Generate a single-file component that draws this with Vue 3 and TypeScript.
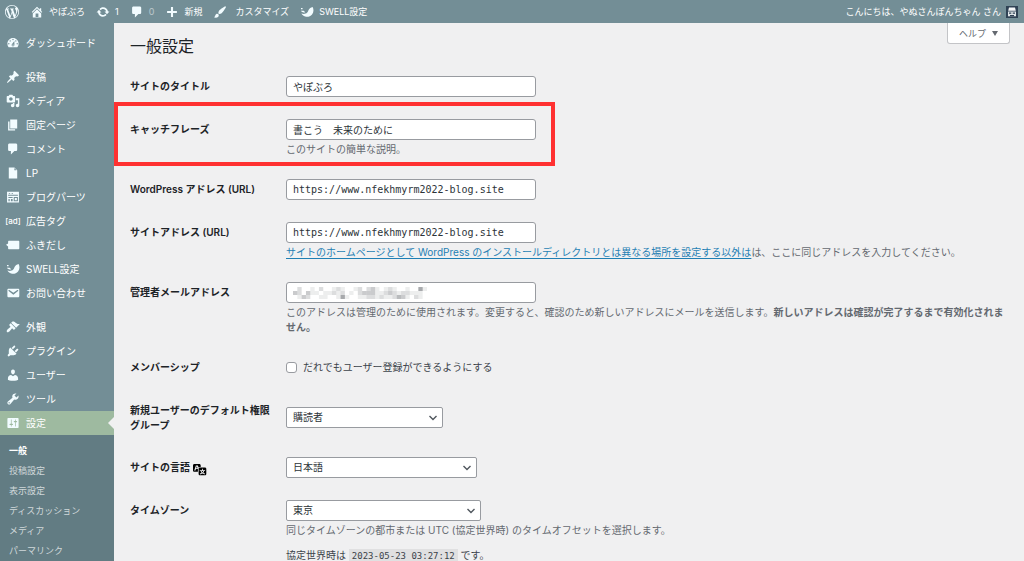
<script setup lang="ts">
import { ref } from 'vue'

interface MenuItem {
  label: string
  icon: string
  current?: boolean
}

const icons: Record<string, string> = {
  wordpress:
    'M20 10c0-5.51-4.49-10-10-10C4.48 0 0 4.49 0 10c0 5.52 4.48 10 10 10 5.51 0 10-4.48 10-10zM7.78 15.37L4.37 6.22c.55-.02 1.17-.08 1.17-.08.5-.06.44-1.13-.06-1.11 0 0-1.45.11-2.37.11-.18 0-.37 0-.58-.01C4.12 2.69 6.87 1.11 10 1.11c2.33 0 4.45.87 6.05 2.34-.68-.11-1.65.39-1.65 1.58 0 .74.45 1.36.9 2.1.35.61.55 1.36.55 2.46 0 1.49-1.4 5-1.4 5l-3.03-8.37c.54-.02.82-.17.82-.17.5-.05.44-1.25-.06-1.22 0 0-1.44.12-2.38.12-.87 0-2.33-.12-2.33-.12-.5-.03-.56 1.2-.06 1.22l.92.08 1.26 3.41zM17.41 10c.24-.64.74-1.87.43-4.25.7 1.29 1.05 2.71 1.05 4.25 0 3.29-1.73 6.24-4.4 7.78.97-2.59 1.94-5.2 2.92-7.78zM6.1 18.09C3.12 16.65 1.11 13.53 1.11 10c0-1.3.23-2.48.72-3.59C3.25 10.3 4.67 14.2 6.1 18.09zm4.03-6.63l2.58 6.98c-.86.29-1.76.45-2.71.45-.79 0-1.57-.11-2.29-.33.81-2.38 1.62-4.74 2.42-7.1z',
  home: 'M16 8.5l1.53 1.53-1.06 1.06L10 4.6l-6.47 6.49-1.06-1.06L10 2.5l4 4v-2h2v4zm-6-2.46l6 5.99V18H4v-5.97zM12 17v-5H8v5h4z',
  update:
    'M10.2 3.28c3.53 0 6.43 2.61 6.92 6h2.08l-3.5 4-3.5-4h2.32c-.45-1.97-2.21-3.45-4.32-3.45-1.45 0-2.73.71-3.54 1.78L4.95 5.66C6.23 4.2 8.11 3.28 10.2 3.28zm-.4 13.44c-3.52 0-6.43-2.61-6.92-6H.8l3.5-4c1.17 1.33 2.33 2.67 3.5 4H5.48c.45 1.97 2.21 3.45 4.32 3.45 1.45 0 2.73-.71 3.54-1.78l1.71 1.95c-1.28 1.46-3.15 2.38-5.25 2.38z',
  comment: 'M5 2h9c1.1 0 2 .9 2 2v7c0 1.1-.9 2-2 2h-2l-5 5v-5H5c-1.1 0-2-.9-2-2V4c0-1.1.9-2 2-2z',
  plus: 'M17 8.5v3h-5.500v5.500h-3v-5.500H3v-3h5.500V3h3v5.500z',
  brush:
    'M18.33 3.57s.27-.8-.31-1.36c-.53-.52-1.22-.24-1.22-.24-.61.3-5.76 3.47-7.67 5.57-.86.96-2.06 3.79-1.09 4.82.92.98 3.96-.17 4.79-1 2.06-2.06 5.21-7.17 5.5-7.79zM1.4 17.65c2.37-1.56 1.46-3.41 3.23-4.64.93-.65 2.22-.62 3.08.29.63.67.8 2.57-.16 3.46-1.57 1.45-4 1.55-6.15.89z',
  swell:
    'M18 2.800c1.800 3.400 1.700 7.600-.8 10.600-2.500 3.100-6.300 4.100-9.800 3.100C4.900 15.800 3.100 14.300 2 12.200c3.200 1 6.300.6 8.300-1.500 2.100-2.200 1.900-6.600 7.700-7.900zM1.200 8.300l4-.2 2.300 2.100c-2.400.9-4.800.1-6.300-1.900zM1.400 4.200h2.300v2H1.400z',
  dashboard:
    'M3.76 16h12.48c1.1-1.37 1.76-3.11 1.76-5 0-4.42-3.58-8-8-8s-8 3.58-8 8c0 1.89.66 3.63 1.76 5zM10 4c.55 0 1 .45 1 1s-.45 1-1 1-1-.45-1-1 .45-1 1-1zM6 6c.55 0 1 .45 1 1s-.45 1-1 1-1-.45-1-1 .45-1 1-1zm8 0c.55 0 1 .45 1 1s-.45 1-1 1-1-.45-1-1 .45-1 1-1zm-5.37 5.55L12 7v6c0 1.1-.9 2-2 2s-2-.9-2-2c0-.57.24-1.08.63-1.45zM4 10c.55 0 1 .45 1 1s-.45 1-1 1-1-.45-1-1 .45-1 1-1zm12 0c.55 0 1 .45 1 1s-.45 1-1 1-1-.45-1-1 .45-1 1-1zm-5 3c0-.55-.45-1-1-1s-1 .45-1 1 .45 1 1 1 1-.45 1-1z',
  pin: 'M10.44 3.02l1.82-1.82 6.36 6.35-1.83 1.82c-1.05-.68-2.48-.57-3.41.36l-.75.75c-.92.93-1.04 2.35-.35 3.41l-1.83 1.82-2.41-2.41-2.8 2.79c-.42.42-3.38 2.71-3.8 2.29s1.86-3.39 2.28-3.81l2.79-2.79L4.1 9.36l1.83-1.82c1.05.69 2.48.57 3.4-.36l.75-.75c.93-.92 1.05-2.35.36-3.41z',
  media:
    'M13 11V4c0-.55-.45-1-1-1h-1.67L9 1H5L3.67 3H2c-.55 0-1 .45-1 1v7c0 .55.45 1 1 1h10c.55 0 1-.45 1-1zM7 4.5c1.38 0 2.5 1.12 2.5 2.5S8.38 9.5 7 9.5 4.5 8.38 4.5 7 5.62 4.5 7 4.5zM14 6h5v10.5c0 1.38-1.12 2.5-2.5 2.5S14 17.88 14 16.5s1.12-2.5 2.5-2.5c.17 0 .34.02.5.05V9h-3V6zm-4 8.05V13h2v3.5c0 1.38-1.12 2.5-2.5 2.5S7 17.88 7 16.5 8.12 14 9.5 14c.17 0 .34.02.5.05z',
  page: 'M6 15V2h10v13H6zm-1 1h8v2H3V5h2v11z',
  document: 'M12 2l4 4v12H4V2h8zm0 4h3l-3-3v3z',
  layout:
    'M1.500 2.500h17v15.500h-17zM3 6.800v1.400h14V6.800zM4 4.200v1h2v-1zm4 0v1h2v-1zM3.500 10v1.500h6V10zm0 3v3.200h1.800V13zm3.500 0v3.200h2.500V13zm4-3v6.200h6V10zm1.500 1.500h3v3.200h-3z',
  balloon: 'M4.500 4h13c.9 0 1.500.6 1.500 1.500v9c0 .9-.6 1.500-1.500 1.500h-13c-.9 0-1.500-.6-1.500-1.500V12L0 9.800 3 8V5.500C3 4.600 3.600 4 4.500 4z',
  mail: 'M3.87 4h13.25C18.37 4 19 4.59 19 5.79v8.42c0 1.19-.63 1.79-1.88 1.79H3.87c-1.25 0-1.88-.6-1.88-1.79V5.79c0-1.2.63-1.79 1.88-1.79zm6.62 8.6l6.74-5.53c.24-.2.43-.66.13-1.07-.29-.41-.82-.42-1.17-.17l-5.7 3.86L4.8 5.83c-.35-.25-.88-.24-1.17.17-.3.41-.11.87.13 1.07z',
  appearance:
    'M14.48 11.06L7.41 3.99l1.5-1.5c.5-.56 2.3-.47 3.51.32 1.21.8 1.43 1.28 2.91 2.1 1.18.64 2.45 1.26 4.45.85zm-.71.71L6.7 4.7 4.93 6.47c-.39.39-.39 1.02 0 1.41l1.06 1.06c.39.39.39 1.03 0 1.42-.6.6-1.43 1.11-2.21 1.69-.35.26-.7.53-1.01.84C1.43 14.23.4 16.08 1.4 17.07c.99 1 2.84-.03 4.18-1.36.31-.31.58-.66.85-1.02.57-.78 1.08-1.61 1.69-2.21.39-.39 1.02-.39 1.41 0l1.06 1.06c.39.39 1.02.39 1.41 0z',
  plugin:
    'M13.11 4.36L9.87 7.6 8 5.73l3.24-3.24c.35-.34 1.05-.2 1.56.32.52.51.66 1.21.31 1.55zm-8 1.77l.91-1.12 9.01 9.01-1.19.84c-.71.71-2.63 1.16-3.82 1.16H6.14L4.9 17.26c-.59.59-1.54.59-2.12 0-.59-.58-.59-1.53 0-2.12l1.24-1.24v-3.88c0-1.13.4-3.19 1.09-3.89zm7.26 3.97l3.24-3.24c.34-.35 1.04-.21 1.55.31.52.51.66 1.21.31 1.55l-3.24 3.25z',
  user: 'M10 9.25c-2.27 0-2.73-3.44-2.73-3.44C7 4.02 7.82 2 9.97 2c2.16 0 2.98 2.02 2.71 3.81 0 0-.41 3.44-2.68 3.44zm0 2.57L12.72 10c2.39 0 4.52 2.33 4.52 4.53v2.49s-3.65 1.13-7.24 1.13c-3.65 0-7.24-1.13-7.24-1.13v-2.49c0-2.25 1.94-4.48 4.47-4.48z',
  wrench:
    'M16.68 9.77c-1.34 1.34-3.3 1.67-4.95.99l-5.41 6.52c-.99.99-2.59.99-3.58 0s-.99-2.59 0-3.57l6.52-5.42c-.68-1.65-.35-3.61.99-4.95 1.28-1.28 3.12-1.62 4.72-1.06l-2.89 2.89 2.82 2.82 2.86-2.87c.53 1.58.18 3.39-1.08 4.65zM3.81 16.21c.4.39 1.04.39 1.43 0 .4-.4.4-1.04 0-1.43-.39-.4-1.03-.4-1.43 0-.39.39-.39 1.03 0 1.43z',
  settings:
    'M18 16V4c0-.55-.45-1-1-1H3c-.55 0-1 .45-1 1v12c0 .55.45 1 1 1h14c.55 0 1-.45 1-1zM8 11h1c.55 0 1 .45 1 1s-.45 1-1 1H8v1.5c0 .28-.22.5-.5.5s-.5-.22-.5-.5V13H6c-.55 0-1-.45-1-1s.45-1 1-1h1V5.500c0-.28.22-.5.5-.5s.5.22.5.5V11zm5-2h-1c-.55 0-1-.45-1-1s.45-1 1-1h1V5.500c0-.28.22-.5.5-.5s.5.22.5.5V7h1c.55 0 1 .45 1 1s-.45 1-1 1h-1v5.500c0 .28-.22.5-.5.5s-.5-.22-.5-.5V9z',
  translate:
    'M11 7H9.49c-.63 0-1.25.3-1.59.7L7 5H4.13l-2.39 7h1.69l.74-2H7v4H2c-1.1 0-2-.9-2-2V5c0-1.1.9-2 2-2h7c1.1 0 2 .9 2 2v2zM6.51 9H4.49l1-2.93zM10 8h7c1.1 0 2 .9 2 2v7c0 1.1-.9 2-2 2h-7c-1.1 0-2-.9-2-2v-7c0-1.1.9-2 2-2zm7.25 5v-1.08h-3.17V9.75h-1.16v2.17H9.75V13h1.28c.11.85.56 1.85 1.28 2.62-.87.36-1.89.62-2.31.62-.01.02.22.97.2 1.46.84 0 2.21-.5 3.28-1.15 1.09.65 2.48 1.15 3.34 1.15-.02-.49.2-1.44.2-1.46-.43 0-1.49-.27-2.38-.63.7-.77 1.14-1.77 1.25-2.61h1.36zm-3.81 1.93c-.5-.46-.85-1.13-1.01-1.93h2.09c-.17.8-.51 1.47-1 1.93l-.04.03s-.03-.02-.04-.03z',
}

const menuGroups: MenuItem[][] = [
  [{ label: 'ダッシュボード', icon: 'dashboard' }],
  [
    { label: '投稿', icon: 'pin' },
    { label: 'メディア', icon: 'media' },
    { label: '固定ページ', icon: 'page' },
    { label: 'コメント', icon: 'comment' },
    { label: 'LP', icon: 'document' },
    { label: 'ブログパーツ', icon: 'layout' },
    { label: '広告タグ', icon: 'ad' },
    { label: 'ふきだし', icon: 'balloon' },
    { label: 'SWELL設定', icon: 'swell' },
    { label: 'お問い合わせ', icon: 'mail' },
  ],
  [
    { label: '外観', icon: 'appearance' },
    { label: 'プラグイン', icon: 'plugin' },
    { label: 'ユーザー', icon: 'user' },
    { label: 'ツール', icon: 'wrench' },
    { label: '設定', icon: 'settings', current: true },
  ],
]

const submenu = ['一般', '投稿設定', '表示設定', 'ディスカッション', 'メディア', 'パーマリンク']

const toolbar = [
  { icon: 'home', label: 'やぽぶろ', kind: 'site' },
  { icon: 'update', label: '1', kind: 'updates' },
  { icon: 'comment', label: '0', kind: 'comments' },
  { icon: 'plus', label: '新規', kind: 'new' },
  { icon: 'brush', label: 'カスタマイズ', kind: 'customize' },
  { icon: 'swell', label: 'SWELL設定', kind: 'swell' },
]

const siteTitle = ref('やぽぶろ')
const tagline = ref('書こう　未来のために')
const wpUrl = ref('https://www.nfekhmyrm2022-blog.site')
const siteUrl = ref('https://www.nfekhmyrm2022-blog.site')
const email = ref('')
const membership = ref(false)

/* Darkness of each tile in the mosaic over the address, 0 (white) to 9. */
const mosaicRows = [
  '0200102001210012023101210010051',
  '3203110112120102333112321221110',
  '0132001100151001122121124310210',
]
const tiles = mosaicRows.flatMap((row, y) =>
  [...row].map((level, x) => ({ x: x * 13, y: y * 12, shade: Number(level) * 0.1 })),
)
</script>

<template>
  <div class="admin">
    <header class="topbar">
      <a href="#" class="wp-logo" aria-label="WordPress">
        <svg viewBox="0 0 20 20"><path :d="icons.wordpress" /></svg>
      </a>
      <a v-for="item in toolbar" :key="item.kind" href="#" class="tool" :class="item.kind">
        <svg viewBox="0 0 20 20"><path :d="icons[item.icon]" fill-rule="evenodd" /></svg>
        <span>{{ item.label }}</span>
      </a>
      <a href="#" class="account">
        <span>こんにちは、やぬさんぽんちゃん さん</span>
        <svg class="avatar" viewBox="0 0 12 12">
          <rect width="12" height="12" fill="#2f4254" />
          <path d="M3 1.500h6l.8 3.200H2.200z" fill="#f4f6f7" />
          <path d="M2 5.500h8v4.800H2z" fill="#dfe5e8" />
          <path d="M3 6.500h2.300v1.200H3zm3.700 0H9v1.200H6.700zM4 9h4v1.300H4z" fill="#2f4254" />
        </svg>
      </a>
    </header>

    <div class="body">
      <nav class="sidebar">
        <ul v-for="(group, g) in menuGroups" :key="g" class="menu">
          <li v-for="item in group" :key="item.label">
            <a href="#" class="menu-link" :class="{ current: item.current }">
              <span v-if="item.icon === 'ad'" class="ad">[ad]</span>
              <svg v-else viewBox="0 0 20 20"><path :d="icons[item.icon]" fill-rule="evenodd" /></svg>
              <span>{{ item.label }}</span>
            </a>
          </li>
        </ul>
        <ul class="submenu">
          <li v-for="(label, i) in submenu" :key="label">
            <a href="#" :class="{ active: i === 0 }">{{ label }}</a>
          </li>
        </ul>
      </nav>

      <main class="content">
        <div class="heading">
          <h1>一般設定</h1>
          <button type="button" class="help">ヘルプ <span class="caret"></span></button>
        </div>

        <form @submit.prevent>
          <div class="row">
            <label class="name" for="title">サイトのタイトル</label>
            <div class="field"><input id="title" v-model="siteTitle" type="text" class="text" /></div>
          </div>

          <div class="row highlighted">
            <label class="name" for="tagline">キャッチフレーズ</label>
            <div class="field">
              <input id="tagline" v-model="tagline" type="text" class="text" />
              <p class="description">このサイトの簡単な説明。</p>
            </div>
          </div>

          <div class="row">
            <label class="name" for="wpurl">WordPress アドレス (URL)</label>
            <div class="field"><input id="wpurl" v-model="wpUrl" type="url" class="text code" /></div>
          </div>

          <div class="row">
            <label class="name" for="siteurl">サイトアドレス (URL)</label>
            <div class="field">
              <input id="siteurl" v-model="siteUrl" type="url" class="text code" />
              <p class="description">
                <a href="#">サイトのホームページとして WordPress のインストールディレクトリとは異なる場所を設定する以外は</a>は、ここに同じアドレスを入力してください。
              </p>
            </div>
          </div>

          <div class="row">
            <label class="name" for="email">管理者メールアドレス</label>
            <div class="field">
              <div class="masked">
                <input id="email" v-model="email" type="email" class="text" />
                <svg class="mosaic" viewBox="0 0 403 36" aria-hidden="true">
                  <rect
                    v-for="tile in tiles"
                    :key="tile.x + '-' + tile.y"
                    :x="tile.x"
                    :y="tile.y"
                    width="13"
                    height="12"
                    fill="#50545a"
                    :fill-opacity="tile.shade"
                  />
                </svg>
              </div>
              <p class="description">
                このアドレスは管理のために使用されます。変更すると、確認のため新しいアドレスにメールを送信します。<strong>新しいアドレスは確認が完了するまで有効化されません。</strong>
              </p>
            </div>
          </div>

          <div class="row">
            <span class="name">メンバーシップ</span>
            <div class="field">
              <label class="check">
                <input v-model="membership" type="checkbox" />
                <span>だれでもユーザー登録ができるようにする</span>
              </label>
            </div>
          </div>

          <div class="row">
            <label class="name" for="role">新規ユーザーのデフォルト権限グループ</label>
            <div class="field">
              <div class="select role">
                <select id="role"><option>購読者</option></select>
                <svg viewBox="0 0 10 10"><path d="M1.500 3l3.500 3.500L8.500 3" /></svg>
              </div>
            </div>
          </div>

          <div class="row">
            <label class="name" for="lang">サイトの言語
              <svg class="translate" viewBox="0 0 20 20"><path :d="icons.translate" /></svg>
            </label>
            <div class="field">
              <div class="select lang">
                <select id="lang"><option>日本語</option></select>
                <svg viewBox="0 0 10 10"><path d="M1.500 3l3.500 3.500L8.500 3" /></svg>
              </div>
            </div>
          </div>

          <div class="row">
            <label class="name" for="tz">タイムゾーン</label>
            <div class="field">
              <div class="select tz">
                <select id="tz"><option>東京</option></select>
                <svg viewBox="0 0 10 10"><path d="M1.500 3l3.500 3.500L8.500 3" /></svg>
              </div>
              <p class="description">同じタイムゾーンの都市または UTC (協定世界時) のタイムオフセットを選択します。</p>
              <p class="utc">協定世界時は <code>2023-05-23 03:27:12</code> です。</p>
            </div>
          </div>
        </form>
      </main>
    </div>
  </div>
</template>

<style>
body {
  background: #f0f0f1;
}
</style>

<style scoped>
.admin {
  display: flex;
  flex-direction: column;
  height: 100vh;
  overflow: hidden;
  background: #f0f0f1;
  color: #3c434a;
  font: 10px/15px Inter, 'Noto Sans CJK JP', sans-serif;
}

a {
  color: inherit;
  text-decoration: none;
}

ul {
  margin: 0;
  padding: 0;
  list-style: none;
}

.topbar {
  display: flex;
  align-items: center;
  flex: none;
  height: 23px;
  padding: 0 6px 0 5px;
  background: #738e96;
  color: #fff;
  font-size: 9px;
}

.topbar svg {
  flex: none;
  width: 14px;
  height: 14px;
  fill: #f2fcff;
}

.wp-logo {
  display: flex;
  margin-right: 11px;
}

.tool {
  display: flex;
  align-items: center;
  gap: 5px;
  margin-right: 11px;
}

.customize {
  gap: 8px;
}

.comments span {
  opacity: 0.5;
}

.account {
  display: flex;
  align-items: center;
  gap: 5px;
  margin-left: auto;
}

.topbar .avatar {
  width: 12px;
  height: 12px;
}

.body {
  display: flex;
  flex: 1;
  min-height: 0;
}

.sidebar {
  display: flex;
  flex-direction: column;
  flex: none;
  width: 114px;
  padding-top: 8px;
  box-sizing: border-box;
  background: #738e96;
  color: #fff;
}

.menu + .menu {
  margin-top: 10px;
}

.menu-link {
  position: relative;
  display: flex;
  align-items: center;
  gap: 6px;
  height: 24px;
  padding-left: 6px;
}

.menu-link svg {
  width: 14px;
  height: 14px;
  fill: #f2fcff;
}

.ad {
  display: flex;
  justify-content: center;
  width: 14px;
  font-size: 8px;
  font-weight: 500;
}

.current {
  background: #9ebaa0;
}

.current::after {
  content: '';
  position: absolute;
  right: 0;
  top: 6px;
  border: 6px solid transparent;
  border-left: 0;
  border-right-color: #f0f0f1;
}

.submenu {
  flex: 1;
  padding: 6px 0 0 9px;
  background: #627c83;
  color: #d0d8da;
  font-size: 9px;
  line-height: 20px;
}

.submenu a {
  display: block;
}

.submenu .active {
  color: #fff;
  font-weight: 700;
}

.content {
  flex: 1;
  min-width: 0;
  padding: 0 14px 0 16px;
}

.heading {
  display: flex;
  justify-content: space-between;
  align-items: flex-start;
}

h1 {
  margin: 0;
  padding: 13px 0 9px;
  color: #1d2327;
  font-size: 16px;
  font-weight: 400;
  line-height: 20px;
}

.help {
  display: flex;
  align-items: center;
  gap: 6px;
  height: 21px;
  padding: 0 11px;
  border: 1px solid #c3c4c7;
  border-top: 0;
  border-radius: 0 0 3px 3px;
  background: #fff;
  color: #646970;
  font: inherit;
  font-size: 9px;
}

.caret {
  border: 3px solid transparent;
  border-top: 5px solid #646970;
  border-bottom: 0;
}

.row {
  position: relative;
  display: grid;
  grid-template-columns: 156px 1fr;
  align-items: center;
}

.highlighted::after {
  content: '';
  position: absolute;
  top: -6px;
  bottom: 2px;
  left: -16px;
  width: 441px;
  box-sizing: border-box;
  border: 4px solid #ff3131;
  pointer-events: none;
}

.name {
  align-self: start;
  padding: 14px 14px 13px 0;
  color: #1d2327;
  font-weight: 600;
}

.translate {
  width: 14px;
  height: 14px;
  margin-bottom: -5px;
}

.field {
  padding: 11px 0;
}

.text {
  display: block;
  width: 250px;
  max-width: 100%;
  height: 21px;
  padding: 0 6px;
  box-sizing: border-box;
  border: 1px solid #989ba0;
  border-radius: 3px;
  background: #fff;
  color: #2c3338;
  font: inherit;
}

.code {
  font-family: 'DejaVu Sans Mono', monospace;
}

.description {
  margin: 2px 0 0;
  color: #646970;
}

.description a {
  color: #1f7fb4;
  text-decoration: underline;
  text-underline-offset: 2px;
}

.description strong {
  font-weight: 600;
}

.masked {
  position: relative;
}

.mosaic {
  position: absolute;
  top: 5px;
  left: 7px;
  width: 134px;
  height: 12px;
}

.check {
  display: flex;
  align-items: center;
  gap: 6px;
  height: 21px;
}

.check input {
  appearance: none;
  width: 11px;
  height: 11px;
  margin: 0;
  border: 1px solid #989ba0;
  border-radius: 3px;
  background: #fff;
}

.select {
  position: relative;
}

.select select {
  appearance: none;
  display: block;
  width: 100%;
  height: 21px;
  padding: 0 18px 0 6px;
  border: 1px solid #989ba0;
  border-radius: 2px;
  background: #fff;
  color: #2c3338;
  font: inherit;
}

.select svg {
  position: absolute;
  top: 6px;
  right: 5px;
  width: 10px;
  height: 10px;
  fill: none;
  stroke: #50575e;
  stroke-width: 1.4;
  pointer-events: none;
}

.role {
  width: 157px;
}

.lang {
  width: 191px;
}

.tz {
  width: 195px;
}

.utc {
  margin: 10px 0 0;
}

code {
  padding: 2px 3px;
  background: #e0e0e1;
  font: 9px 'DejaVu Sans Mono', monospace;
}
</style>
